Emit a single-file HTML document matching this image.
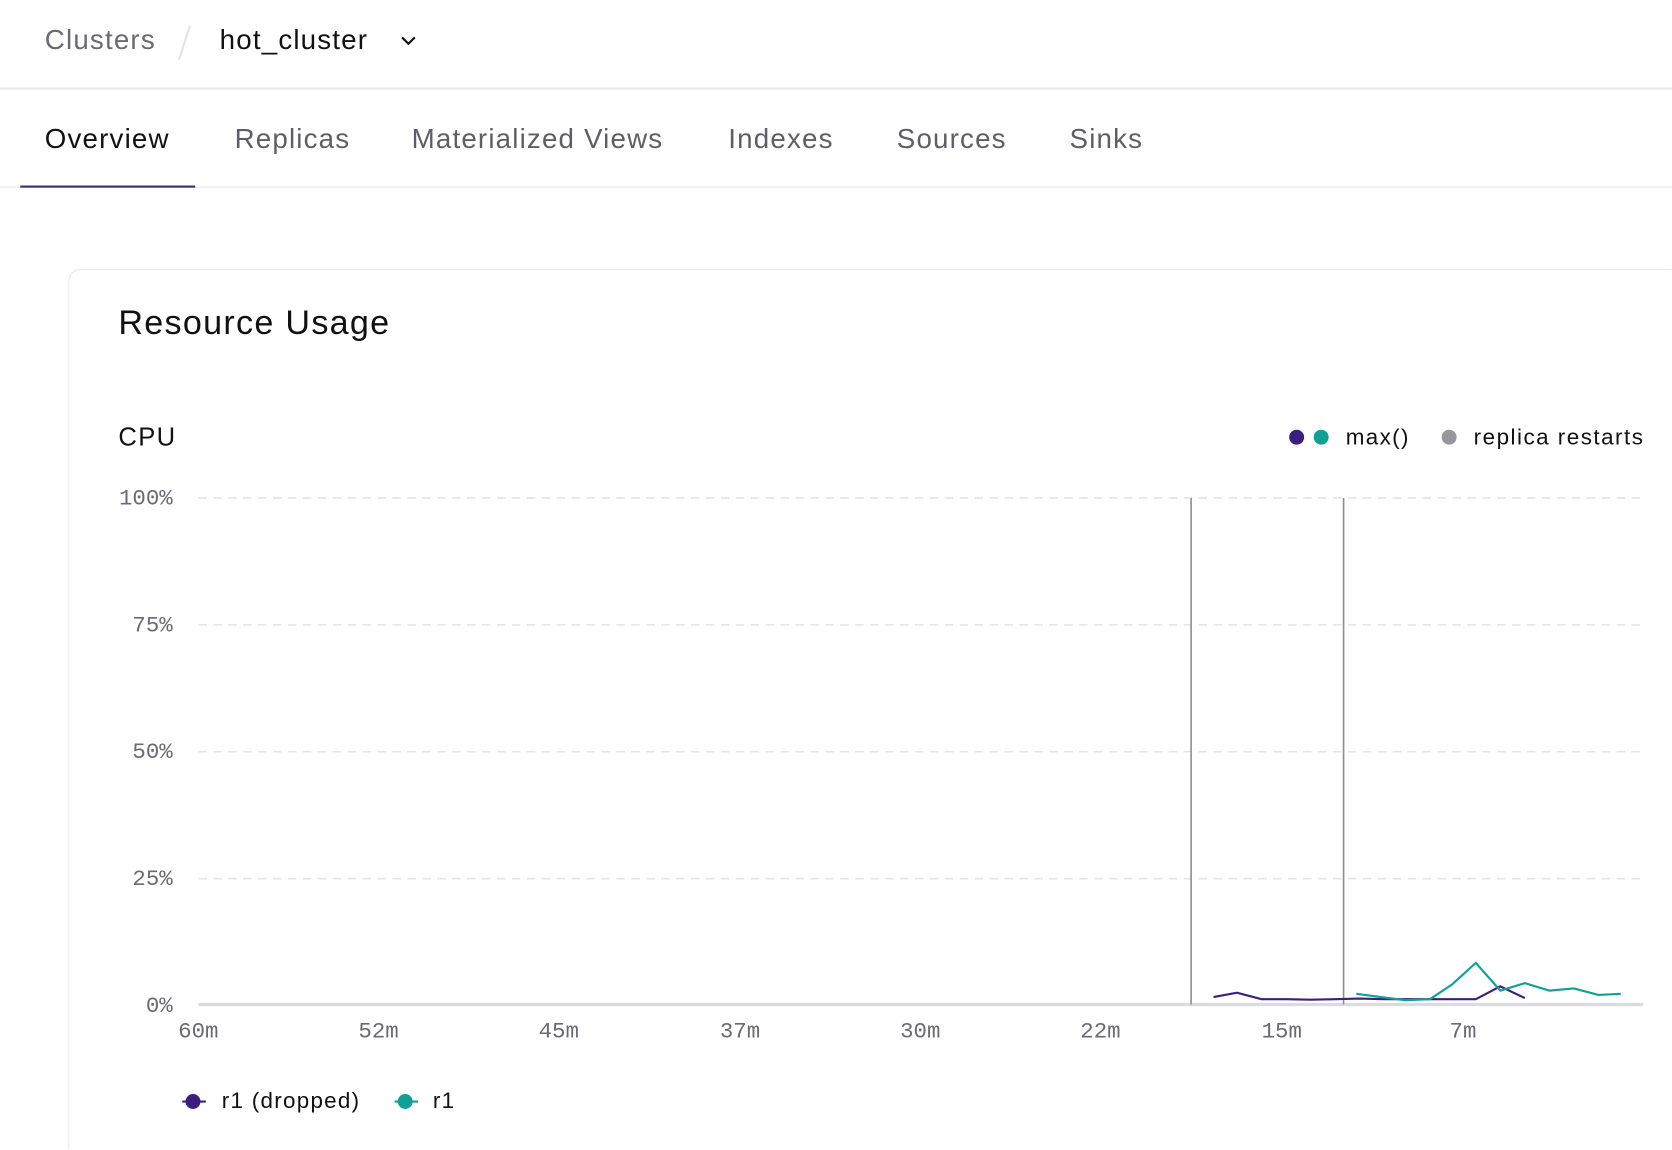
<!DOCTYPE html>
<html><head><meta charset="utf-8"><style>
html,body{margin:0;padding:0;background:#fff;overflow:hidden;width:1672px;height:1150px;}
body{position:relative;font-family:"Liberation Sans",sans-serif;}
#w{position:absolute;left:0;top:0;width:1568px;height:1078px;overflow:hidden;transform:scale(1.06633);transform-origin:0 0;}
.a{position:absolute;white-space:nowrap;line-height:1;}
.tab{position:absolute;top:115px;font-size:26px;color:#5f5d66;letter-spacing:1.1px;}
.yl{position:absolute;right:1406px;font-family:"Liberation Mono",monospace;font-size:21px;color:#6b6a70;line-height:1;}
.xl{position:absolute;top:958px;font-family:"Liberation Mono",monospace;font-size:21px;color:#6b6a70;line-height:1;transform:translateX(-50%);}
</style></head><body><div id="w">
<div class="a" style="left:42px;top:24px;font-size:26px;color:#6b6a70;letter-spacing:1.1px">Clusters</div>
<div class="a" style="left:172px;top:24px;width:2px;height:32px;background:#e2e1e6;transform:skewX(-18deg)"></div>
<div class="a" style="left:206px;top:24px;font-size:26px;color:#111;letter-spacing:1.1px">hot_cluster</div>
<svg class="a" style="left:374px;top:31px" width="18" height="14" viewBox="0 0 18 14"><path d="M3 4l6 6 6-6" fill="none" stroke="#111" stroke-width="2"/></svg>
<div class="a" style="left:0;top:82px;width:1568px;height:2px;background:#e6e5ea"></div>
<div class="tab" style="left:42px;color:#111">Overview</div>
<div class="tab" style="left:220px">Replicas</div>
<div class="tab" style="left:386px">Materialized Views</div>
<div class="tab" style="left:683px">Indexes</div>
<div class="tab" style="left:841px">Sources</div>
<div class="tab" style="left:1003px">Sinks</div>
<div class="a" style="left:0;top:175px;width:1568px;height:1px;background:#e6e5ea"></div>
<div class="a" style="left:19px;top:174px;width:164px;height:2px;background:#3b2a80"></div>
<div class="a" style="left:64px;top:252px;width:1502px;height:825px;border:1px solid #e6e5ea;border-bottom:none;border-right:none;border-radius:12px 0 0 0"></div>
<div class="a" style="left:111px;top:286px;font-size:32px;color:#111;letter-spacing:1.2px">Resource Usage</div>
<div class="a" style="left:111px;top:399px;font-size:24px;color:#111;letter-spacing:1.3px">CPU</div>
<div class="a" style="left:1209px;top:403px;width:14px;height:14px;border-radius:50%;background:#3b1f80"></div>
<div class="a" style="left:1232px;top:403px;width:14px;height:14px;border-radius:50%;background:#11a095"></div>
<div class="a" style="left:1262px;top:400px;font-size:21px;color:#111;letter-spacing:1.3px">max()</div>
<div class="a" style="left:1352px;top:403px;width:14px;height:14px;border-radius:50%;background:#98979d"></div>
<div class="a" style="left:1382px;top:400px;font-size:21px;color:#111;letter-spacing:1.4px">replica restarts</div>
<div class="yl" style="top:458px">100%</div>
<div class="yl" style="top:577px">75%</div>
<div class="yl" style="top:696px">50%</div>
<div class="yl" style="top:815px">25%</div>
<div class="yl" style="top:934px">0%</div>
<svg class="a" style="left:0;top:0" width="1568" height="1078">
<g stroke="#e4e3e8" stroke-width="1.5" stroke-dasharray="8 6">
<line x1="186" y1="467" x2="1541" y2="467"/><line x1="186" y1="586" x2="1541" y2="586"/><line x1="186" y1="705" x2="1541" y2="705"/><line x1="186" y1="824" x2="1541" y2="824"/></g>
<line x1="186" y1="942" x2="1541" y2="942" stroke="#dcdbe0" stroke-width="3"/>
<line x1="1117" y1="467" x2="1117" y2="942" stroke="#8e8d93" stroke-width="1.5"/>
<line x1="1260" y1="467" x2="1260" y2="942" stroke="#8e8d93" stroke-width="1.5"/>
<polyline fill="none" stroke="#3b1f80" stroke-width="2" points="1138,935 1160,931 1183,937 1206,937 1229,937.5 1252,937 1275,936.5 1298,937 1321,937 1344,937 1362,937 1384,937 1407,925 1430,936"/>
<polyline fill="none" stroke="#11a095" stroke-width="2" points="1272,932 1295,935 1318,938 1341,937 1362,923 1384,903 1407,929 1430,922 1453,929 1476,927 1499,933 1520,932"/>
<line x1="171" y1="1033" x2="193" y2="1033" stroke="#3b1f80" stroke-width="2"/><circle cx="181" cy="1033" r="7" fill="#3b1f80"/>
<line x1="370" y1="1033" x2="392" y2="1033" stroke="#11a095" stroke-width="2"/><circle cx="380" cy="1033" r="7" fill="#11a095"/>
</svg>
<div class="xl" style="left:186px">60m</div>
<div class="xl" style="left:355px">52m</div>
<div class="xl" style="left:524px">45m</div>
<div class="xl" style="left:694px">37m</div>
<div class="xl" style="left:863px">30m</div>
<div class="xl" style="left:1032px">22m</div>
<div class="xl" style="left:1202px">15m</div>
<div class="xl" style="left:1372px">7m</div>
<div class="a" style="left:208px;top:1022px;font-size:21px;color:#111;letter-spacing:1.2px">r1 (dropped)</div>
<div class="a" style="left:406px;top:1022px;font-size:21px;color:#111;letter-spacing:1.2px">r1</div>
</div></body></html>
